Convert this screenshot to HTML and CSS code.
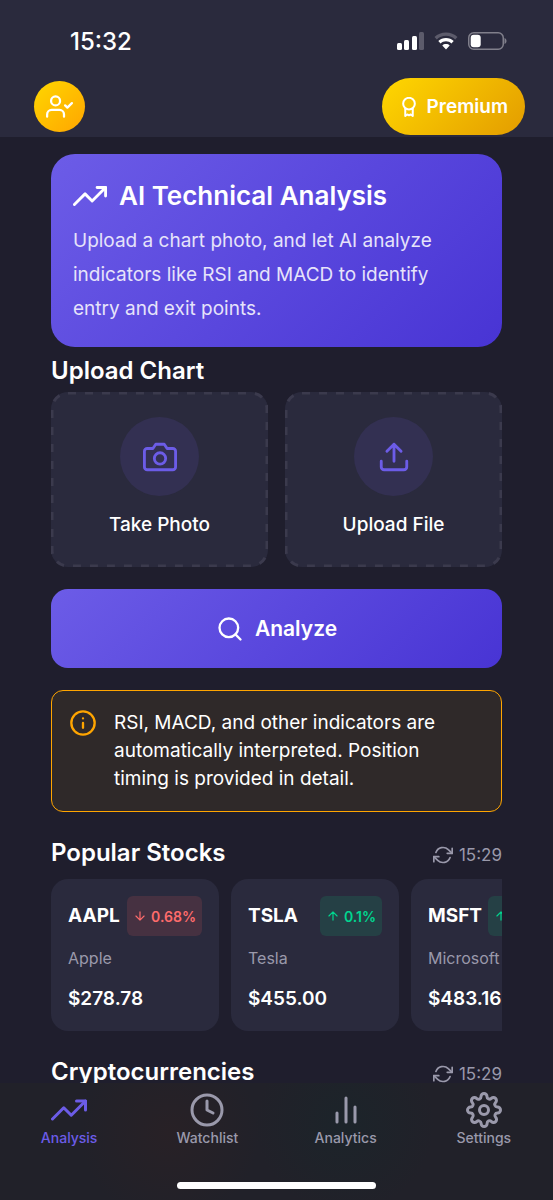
FILE: index.html
```html
<!DOCTYPE html>
<html lang="en">
<head>
<meta charset="utf-8">
<meta name="viewport" content="width=device-width, initial-scale=1">
<title>AI Technical Analysis</title>
<link rel="stylesheet" href="styles.css">
</head>
<body>
<svg width="0" height="0" class="sprite" aria-hidden="true">
  <symbol id="trend" viewBox="0 0 24 24"><path d="M23 6l-9.500 9.500-5-5L1 18"/><path d="M17 6h6v6"/></symbol>
  <symbol id="refresh" viewBox="0 0 24 24"><path d="M23 4v6h-6M1 20v-6h6"/><path d="M3.510 9a9 9 0 0 1 14.850-3.360L23 10M1 14l4.640 4.360A9 9 0 0 0 20.490 15"/></symbol>
  <symbol id="up" viewBox="0 0 24 24"><path d="M12 19V5M5 12l7-7 7 7"/></symbol>
  <symbol id="down" viewBox="0 0 24 24"><path d="M12 5v14M19 12l-7 7-7-7"/></symbol>
</svg>
<div class="app">
  <header class="top">
    <div class="status">
      <time class="clock">15:32</time>
      <div class="signals">
        <svg class="signal" viewBox="0 0 27 18" aria-hidden="true"><rect y="11" width="5" height="7" rx="1.500"/><rect x="7" y="8" width="5" height="10" rx="1.500"/><rect x="15" y="4" width="5" height="14" rx="1.500"/><rect class="dim" x="22" width="5" height="18" rx="1.500"/></svg>
        <svg class="wifi" viewBox="0 0 24 18" aria-hidden="true"><path class="dim" d="M12 0.500C7.500 0.500 3.500 2.200 0.500 5l2.300 2.400C5.300 5.100 8.500 3.800 12 3.800s6.700 1.300 9.200 3.600L23.500 5C20.500 2.200 16.500 0.500 12 0.500z"/><path d="M12 6c-3 0-5.700 1.100-7.700 3l2.300 2.400C8 10 9.900 9.200 12 9.200s4 .8 5.400 2.200L19.700 9C17.700 7.100 15 6 12 6zM12 12c-1.500 0-2.700.5-3.700 1.400L12 17.500l3.700-4.100c-1-.9-2.200-1.400-3.700-1.400z"/></svg>
        <svg class="battery" viewBox="0 0 39 18" aria-hidden="true"><rect class="shell" x=".75" y=".75" width="34.500" height="16.500" rx="5"/><path class="tip" d="M36.500 6v6c1.300-.5 2-1.700 2-3s-.7-2.500-2-3z"/><rect x="2.700" y="2.800" width="10" height="12.400" rx="3"/></svg>
      </div>
    </div>
    <div class="bar">
      <button class="profile" aria-label="Profile"><svg class="icon i27" viewBox="0 0 24 24"><path d="M16 21v-2a4 4 0 0 0-4-4H5a4 4 0 0 0-4 4v2"/><circle cx="8.500" cy="7" r="4"/><path d="M17 11l2 2 4-4"/></svg></button>
      <button class="premium"><svg class="icon i20 award" viewBox="0 0 24 24"><circle cx="12" cy="8" r="7"/><path d="M7.500 14v8.800l2.500-1.800 2 1 2-1 2.500 1.800V14"/></svg>Premium</button>
    </div>
  </header>

  <main class="content">
    <section class="hero">
      <h1><svg class="icon i34" aria-hidden="true"><use href="#trend"/></svg>AI Technical Analysis</h1>
      <p>Upload a chart photo, and let AI analyze indicators like RSI and MACD to identify entry and exit points.</p>
    </section>

    <section>
      <h2>Upload Chart</h2>
      <div class="uploads">
        <button class="upload"><svg class="dash" aria-hidden="true"><rect x="1" y="1" rx="16"/></svg><span class="disc"><svg class="icon i34" viewBox="0 0 24 24"><path d="M23 19a2 2 0 0 1-2 2H3a2 2 0 0 1-2-2V8a2 2 0 0 1 2-2h4l2-3h6l2 3h4a2 2 0 0 1 2 2z"/><circle cx="12" cy="13" r="4"/></svg></span>Take Photo</button>
        <button class="upload"><svg class="dash" aria-hidden="true"><rect x="1" y="1" rx="16"/></svg><span class="disc"><svg class="icon i34" viewBox="0 0 24 24"><path d="M21 15v4a2 2 0 0 1-2 2H5a2 2 0 0 1-2-2v-4M17 8l-5-5-5 5M12 3v12"/></svg></span>Upload File</button>
      </div>
    </section>

    <button class="analyze"><svg class="icon i28" viewBox="0 0 24 24"><circle cx="11" cy="11" r="8"/><path d="M21 21l-4.350-4.350"/></svg>Analyze</button>

    <aside class="note">
      <svg class="icon i28" viewBox="0 0 24 24" aria-hidden="true"><circle cx="12" cy="12" r="10"/><path d="M12 16v-4M12 8h.01"/></svg>
      <p>RSI, MACD, and other indicators are automatically interpreted. Position timing is provided in detail.</p>
    </aside>

    <section class="market">
      <div class="heading"><h2>Popular Stocks</h2><button class="refresh" aria-label="Refresh stocks, updated 15:29"><svg class="icon i20"><use href="#refresh"/></svg>15:29</button></div>
      <div class="cards">
        <article class="card"><div class="line"><h3>AAPL</h3><span class="change fall"><svg class="icon i14"><use href="#down"/></svg>0.68%</span></div><p class="name">Apple</p><p class="price">$278.78</p></article>
        <article class="card"><div class="line"><h3>TSLA</h3><span class="change rise"><svg class="icon i14"><use href="#up"/></svg>0.1%</span></div><p class="name">Tesla</p><p class="price">$455.00</p></article>
        <article class="card"><div class="line"><h3>MSFT</h3><span class="change rise wide"><svg class="icon i14"><use href="#up"/></svg></span></div><p class="name">Microsoft</p><p class="price">$483.16</p></article>
      </div>
    </section>

    <section class="market">
      <div class="heading"><h2>Cryptocurrencies</h2><button class="refresh" aria-label="Refresh cryptocurrencies, updated 15:29"><svg class="icon i20"><use href="#refresh"/></svg>15:29</button></div>
    </section>
  </main>

  <footer class="bottom">
    <nav class="tabs">
      <a class="tab active" href="#analysis" aria-current="page"><svg class="icon i36"><use href="#trend"/></svg>Analysis</a>
      <a class="tab" href="#watchlist"><svg class="icon i36" viewBox="0 0 24 24"><circle cx="12" cy="12" r="10"/><path d="M12 6v6l4 2"/></svg>Watchlist</a>
      <a class="tab" href="#analytics"><svg class="icon i36" viewBox="0 0 24 24"><path d="M18 20V10M12 20V4M6 20v-6"/></svg>Analytics</a>
      <a class="tab" href="#settings"><svg class="icon i36" viewBox="0 0 24 24"><circle cx="12" cy="12" r="3"/><path d="M19.400 15a1.650 1.650 0 0 0 .33 1.820l.06.06a2 2 0 0 1 0 2.830 2 2 0 0 1-2.830 0l-.06-.06a1.650 1.650 0 0 0-1.820-.33 1.650 1.650 0 0 0-1 1.510V21a2 2 0 0 1-2 2 2 2 0 0 1-2-2v-.09A1.650 1.650 0 0 0 9 19.400a1.650 1.650 0 0 0-1.820.33l-.06.06a2 2 0 0 1-2.830 0 2 2 0 0 1 0-2.830l.06-.06a1.650 1.650 0 0 0 .33-1.820 1.650 1.650 0 0 0-1.510-1H3a2 2 0 0 1-2-2 2 2 0 0 1 2-2h.09A1.650 1.650 0 0 0 4.600 9a1.650 1.650 0 0 0-.33-1.820l-.06-.06a2 2 0 0 1 0-2.830 2 2 0 0 1 2.830 0l.06.06a1.650 1.650 0 0 0 1.820.33H9a1.650 1.650 0 0 0 1-1.510V3a2 2 0 0 1 2-2 2 2 0 0 1 2 2v.09a1.650 1.650 0 0 0 1 1.510 1.650 1.650 0 0 0 1.820-.33l.06-.06a2 2 0 0 1 2.830 0 2 2 0 0 1 0 2.830l-.06.06a1.650 1.650 0 0 0-.33 1.820V9a1.650 1.650 0 0 0 1.510 1H21a2 2 0 0 1 2 2 2 2 0 0 1-2 2h-.09a1.650 1.650 0 0 0-1.510 1z"/></svg>Settings</a>
    </nav>
    <div class="home"></div>
  </footer>
</div>
</body>
</html>
```
FILE: styles.css
```css
* { box-sizing: border-box; }
body, h1, h2, h3, p { margin: 0; }
body { background: #1f1e2d; color: #fff; font-family: Inter, "Liberation Sans", sans-serif; }
button { border: 0; padding: 0; font: inherit; color: inherit; background: none; cursor: pointer; }
.sprite { position: absolute; }
.app { height: 100vh; display: flex; flex-direction: column; }

.icon { fill: none; stroke: currentColor; stroke-width: 2; stroke-linecap: round; stroke-linejoin: round; flex: none; display: block; }
.i14 { width: 14px; height: 14px; }
.i20 { width: 20px; height: 20px; }
.i27 { width: 27px; height: 27px; }
.i28 { width: 28px; height: 28px; }
.i34 { width: 34px; height: 34px; }
.i36 { width: 36px; height: 36px; }

.top { flex: none; background: #2a2a3d; padding: 26px 28px 2px 34px; }
.status { display: flex; justify-content: space-between; align-items: center; height: 30px; padding: 0 18px 0 36px; }
.clock { font-size: 24px; font-weight: 500; }
.signals { display: flex; align-items: center; gap: 10px; fill: #fff; }
.signals svg { display: block; height: 18px; }
.signal { width: 27px; }
.wifi { width: 24px; }
.battery { width: 39px; }
.dim { fill: #5c5b6b; }
.shell { fill: none; stroke: #807f8b; stroke-width: 1.5; }
.tip { fill: #807f8b; }
.bar { display: flex; justify-content: space-between; align-items: center; margin-top: 22px; }
.profile { width: 51px; height: 51px; border-radius: 50%; display: grid; place-items: center; background: linear-gradient(135deg, #ffd700, #ffa500); }
.premium { display: flex; align-items: center; gap: 8px; height: 57px; padding: 0 17px; border-radius: 29px; background: linear-gradient(135deg, #ffd700, #e39c00); font-size: 19px; font-weight: 600; }
.award { stroke-width: 2.4; }

.content { flex: 1; min-height: 0; overflow: hidden; padding: 17px 51px 0; }
.hero { border-radius: 24px; background: linear-gradient(135deg, #6c5ce7, #4834d4); padding: 23px 22px 21px; }
.hero h1 { display: flex; align-items: center; gap: 12px; font-size: 26px; line-height: 38px; font-weight: 600; }
.hero p { margin-top: 9px; font-size: 19px; line-height: 34px; color: #e6e3fa; }
h2 { font-size: 24px; line-height: 30px; font-weight: 600; }
.hero + section { margin-top: 9px; }
.uploads { display: grid; grid-template-columns: 1fr 1fr; gap: 17px; margin-top: 6px; }
.upload { position: relative; display: flex; flex-direction: column; align-items: center; gap: 16px; padding: 25px 12px 29px; border-radius: 17px; background: #2a2a3d; font-size: 19px; line-height: 26px; font-weight: 500; }
.dash { position: absolute; inset: 0; width: 100%; height: 100%; }
.dash rect { width: calc(100% - 2px); height: calc(100% - 2px); fill: none; stroke: #3b3a4d; stroke-width: 3; stroke-dasharray: 8 9; }
.disc { width: 79px; height: 79px; border-radius: 50%; display: grid; place-items: center; background: #333052; color: #6c5ce7; }
.analyze { width: 100%; height: 79px; margin-top: 22px; display: flex; align-items: center; justify-content: center; gap: 11px; border-radius: 17px; background: linear-gradient(135deg, #6c5ce7, #4834d4); font-size: 21px; font-weight: 600; }
.note { margin-top: 22px; display: flex; gap: 17px; padding: 18px 40px 18px 17px; border: 1px solid #ffa500; border-radius: 12px; background: #2f2929; }
.note .icon { color: #ffa500; }
.note p { font-size: 19px; line-height: 28px; color: #fff; }
.market { margin-top: 26px; }
.heading { display: flex; justify-content: space-between; align-items: center; }
.refresh { display: flex; align-items: center; gap: 6px; padding-top: 4px; font-size: 17px; line-height: 20px; color: #9a99ab; }
.cards { display: flex; gap: 12px; margin-top: 11px; overflow: hidden; }
.card { flex: none; width: 168px; padding: 17px 17px 20px; border-radius: 17px; background: #2a2a3d; }
.line { display: flex; justify-content: space-between; align-items: center; gap: 6px; }
h3 { font-size: 19px; line-height: 24px; font-weight: 700; }
.change { flex: none; display: flex; align-items: center; gap: 4px; height: 40px; padding: 0 6px; border-radius: 6px; font-size: 14px; font-weight: 600; }
.wide { flex-grow: 1; }
.fall { color: #ff6b6b; background: #463141; }
.rise { color: #00d68f; background: #254045; }
.name { margin-top: 12px; font-size: 16px; line-height: 20px; color: #9a99ab; }
.price { margin-top: 19px; font-size: 19px; line-height: 24px; font-weight: 600; }

.bottom { flex: none; padding: 9px 0 11px; background: radial-gradient(circle at 170px 50px, #282126, transparent 90px), radial-gradient(circle at 345px 40px, #1c242a, transparent 90px), #212129; }
.tabs { display: grid; grid-template-columns: repeat(4, 1fr); }
.tab { display: flex; flex-direction: column; align-items: center; text-decoration: none; font-size: 14px; line-height: 20px; font-weight: 500; color: #9a99ab; }
.active { color: #6c5ce7; }
.home { width: 36%; height: 7px; margin: 34px auto 0; border-radius: 4px; background: #fff; }
```
